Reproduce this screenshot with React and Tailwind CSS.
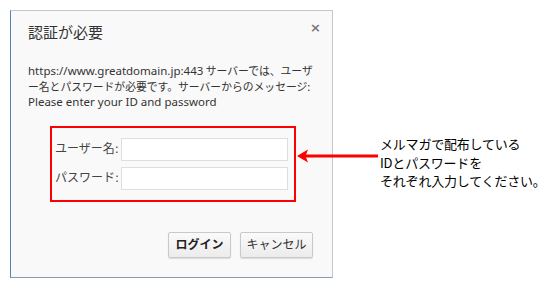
const jp = { fontFamily: '"DejaVu Sans", "Noto Sans CJK JP", sans-serif' }

export default function App() {
  return (
    <div className="relative w-[560px] h-[290px] bg-white overflow-hidden" style={jp}>
      <div className="flex pt-[10px] pl-[10px]">
        {/* dialog */}
        <div className="relative w-[323px] h-[268px] bg-[#f9f9f9] border border-[#c3c7cc] border-l-[#5b7fb0] border-b-[#8a9bb3] flex flex-col">
          <div className="flex items-center justify-between pl-[17px] pr-[11px] pt-[11px]">
            <h1 className="text-[15px] text-[#333] leading-[20px] font-['Noto_Sans_CJK_JP']">認証が必要</h1>
            <span className="text-[#777] text-[13px] font-bold leading-none -mt-[9px]">×</span>
          </div>
          <p className="mt-[21px] pl-[17px] text-[10.8px] leading-[15.5px] text-[#333] whitespace-nowrap font-['Noto_Sans_CJK_JP']">
            <span className="text-[11.5px] font-['Noto_Sans']">https://www.greatdomain.jp:443</span> サーバーでは、ユーザ
            <br />
            ー名とパスワードが必要です。サーバーからのメッセージ:
            <br />
            <span className="text-[11.5px] font-['Noto_Sans']">Please enter your ID and password</span>
          </p>
          <div className="mt-[16px] ml-[39px] w-[246px] h-[76px] border-2 border-[#ff0000] flex flex-col justify-center gap-[6px] pl-[3px] pr-[6px]">
            <div className="flex items-center justify-between">
              <span className="text-[12px] text-[#444]">ユーザー名:</span>
              <div className="w-[167px] h-[23px] bg-white border border-[#dedede]" />
            </div>
            <div className="flex items-center justify-between">
              <span className="text-[12px] text-[#444]">パスワード:</span>
              <div className="w-[167px] h-[23px] bg-white border border-[#dedede]" />
            </div>
          </div>
          <div className="mt-auto mb-[19px] pr-[19px] flex justify-end gap-[9px]">
            <button className="w-[63px] h-[26px] rounded-[2px] border border-[#c9c9c9] bg-gradient-to-b from-[#fafafa] to-[#ececec] shadow-[0_1px_1px_rgba(0,0,0,0.12)] text-[12px] font-bold text-[#222]">ログイン</button>
            <button className="w-[73px] h-[26px] rounded-[2px] border border-[#c9c9c9] bg-gradient-to-b from-[#fafafa] to-[#ececec] shadow-[0_1px_1px_rgba(0,0,0,0.12)] text-[12px] text-[#333]">キャンセル</button>
          </div>
        </div>
        {/* annotation */}
        <div className="ml-[47px] mt-[125px] text-[13px] leading-[18.5px] text-black font-['Noto_Sans_CJK_JP'] tracking-[-0.2px]">
          <p>メルマガで配布している</p>
          <p>IDとパスワードを</p>
          <p>それぞれ入力してください。</p>
        </div>
      </div>
      {/* arrow */}
      <svg className="absolute left-[296px] top-[148px]" width="82" height="16" viewBox="0 0 82 16">
        <line x1="8" y1="8" x2="82" y2="8" stroke="#ff0000" strokeWidth="3" />
        <path d="M1 8 L12 1.5 L9.5 8 L12 14.5 Z" fill="#ff0000" />
      </svg>
    </div>
  )
}
